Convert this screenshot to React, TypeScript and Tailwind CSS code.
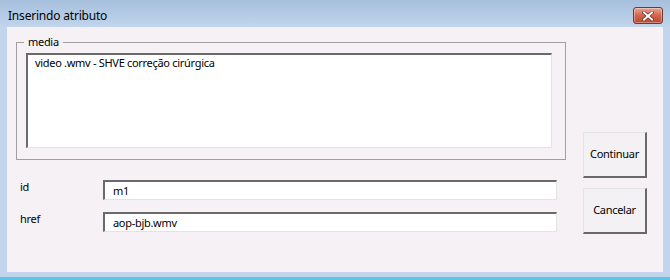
export default function App() {
  const font = { fontFamily: '"Noto Sans", "DejaVu Sans", sans-serif' };
  const sunken =
    "bg-white border-t-2 border-l-2 border-t-[#6a6a6a] border-l-[#6a6a6a] border-r border-b border-r-[#e3e3e3] border-b-[#e3e3e3]";
  const btn =
    "w-[64px] h-[46px] bg-[#f3f1f3] border border-t-[#e4e4e4] border-l-[#e4e4e4] border-r-2 border-b-2 border-r-[#696969] border-b-[#696969] flex items-center justify-center text-[11px] tracking-[-0.3px] text-black";
  return (
    <div className="w-[670px] h-[280px] flex flex-col bg-[#c2d5ec] overflow-hidden" style={font}>
      {/* title bar */}
      <div className="h-[27px] flex items-start justify-between pl-[8px] pr-[7px] bg-gradient-to-b from-[#a6bfdc] to-[#c1d5ec]">
        <span className="mt-[8px] text-[12px] tracking-[-0.2px] text-black leading-[16px]">Inserindo atributo</span>
        <div className="mt-[7px] w-[30px] h-[17px] rounded-[3px] border border-[#6b3b35] bg-gradient-to-b from-[#e7a493] via-[#d3654c] to-[#bc442c] flex items-center justify-center shadow-[inset_0_0_0_1px_rgba(255,255,255,0.35)]">
          <svg width="12" height="10" viewBox="0 0 12 10">
            <path d="M2 1.5 L10 8.5 M10 1.5 L2 8.5" stroke="#5a2a22" strokeWidth="3.2" strokeLinecap="square" />
            <path d="M2 1.5 L10 8.5 M10 1.5 L2 8.5" stroke="#ffffff" strokeWidth="2" strokeLinecap="square" />
          </svg>
        </div>
      </div>
      {/* client */}
      <div className="mx-[7px] h-[245px] bg-[#f5f1f5] flex pl-[9px] pt-[15px]">
        <div className="w-[550px] flex flex-col">
          <div className="relative h-[118px] border border-[#a0a0a0] pt-[10px] pl-[9px] pr-[13px] pb-[11px]">
            <span className="absolute left-[7px] top-[-9px] px-[4px] bg-[#f5f1f5] text-[11px] tracking-[-0.3px] leading-[16px] text-black">media</span>
            <div className={`h-full ${sunken} pl-[7px] pt-0`}>
              <div className="text-[11px] tracking-[-0.3px] leading-[16px] text-black">video .wmv - SHVE correção cirúrgica</div>
            </div>
          </div>
          <div className="mt-[20px] flex flex-col gap-[12px]">
            <div className="flex items-start">
              <span className="w-[87px] pl-[4px] text-[11px] tracking-[-0.3px] leading-[14px] text-black">id</span>
              <div className={`w-[454px] h-[20px] ${sunken} pl-[8px] flex items-center`}>
                <span className="text-[11px] tracking-[-0.3px] leading-none text-black">m1</span>
              </div>
            </div>
            <div className="flex items-start">
              <span className="w-[87px] pl-[4px] text-[11px] tracking-[-0.3px] leading-[14px] text-black">href</span>
              <div className={`w-[454px] h-[20px] ${sunken} pl-[8px] flex items-center`}>
                <span className="text-[11px] tracking-[-0.3px] leading-none text-black">aop-bjb.wmv</span>
              </div>
            </div>
          </div>
        </div>
        <div className="ml-[17px] pt-[90px] flex flex-col gap-[10px]">
          <div className={btn}>Continuar</div>
          <div className={btn}>Cancelar</div>
        </div>
      </div>
      <div className="h-[5px]" />
      <div className="h-[3px] bg-[#5cc6e8]" />
    </div>
  );
}
